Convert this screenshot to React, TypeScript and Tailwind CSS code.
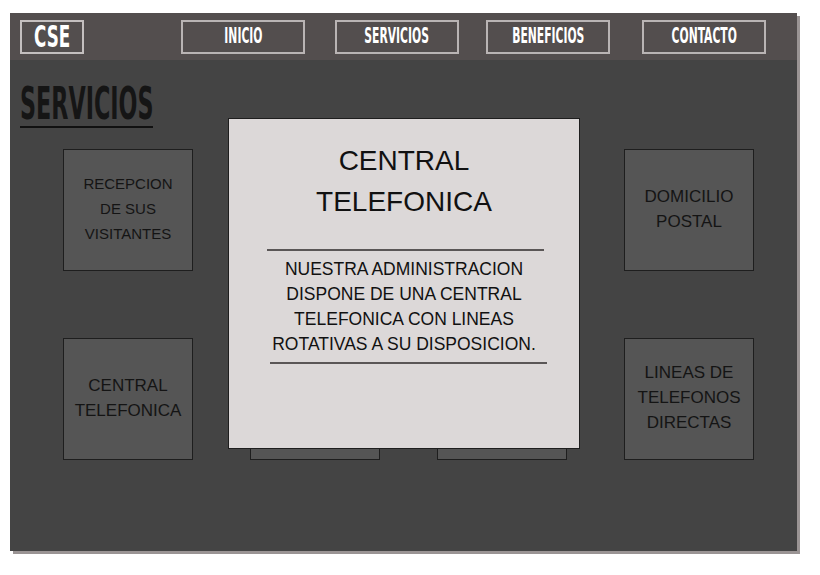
import React from 'react';

const navItems = [
  { label: 'INICIO', ml: 'ml-[97px]' },
  { label: 'SERVICIOS', ml: 'ml-[30px]' },
  { label: 'BENEFICIOS', ml: 'ml-[27px]' },
  { label: 'CONTACTO', ml: 'ml-[32px]' },
];

const services = [
  { lines: ['RECEPCION', 'DE SUS', 'VISITANTES'], size: 'text-[15px]' },
  { lines: [''], size: 'text-[17px]' },
  { lines: [''], size: 'text-[17px]' },
  { lines: ['DOMICILIO', 'POSTAL'], size: 'text-[17px]' },
  { lines: ['CENTRAL', 'TELEFONICA'], size: 'text-[17px]' },
  { lines: [''], size: 'text-[17px]' },
  { lines: [''], size: 'text-[17px]' },
  { lines: ['LINEAS DE', 'TELEFONOS', 'DIRECTAS'], size: 'text-[17px]' },
];

const narrow = "font-['DejaVu_Sans_Condensed','Liberation_Sans',sans-serif] font-bold";

export default function App() {
  return (
    <div className="w-full h-[575px] bg-white pt-[13px] pl-[10px] font-['Liberation_Sans',Arial,sans-serif]">
      <div className="w-[787px] h-[538px] flex flex-col shadow-[3px_3px_0_#9a9494]">
        {/* header */}
        <div className="h-[47px] bg-[#534e4e] flex items-center pl-[10px]">
          <div className="w-[64px] h-[34px] border-2 border-[#c4bfbf] flex items-center justify-center overflow-hidden">
            <span className={`${narrow} inline-block text-[30px] leading-none text-white scale-x-[0.62]`}>CSE</span>
          </div>
          {navItems.map((n) => (
            <div
              key={n.label}
              className={`${n.ml} w-[124px] h-[34px] border-2 border-[#b9b4b4] flex items-center justify-center overflow-hidden`}
            >
              <span className={`${narrow} inline-block text-[21px] leading-none text-white scale-x-[0.57] whitespace-nowrap`}>
                {n.label}
              </span>
            </div>
          ))}
        </div>

        {/* content */}
        <div className="relative flex-1 bg-[#444444]">
          <div className="pl-[10px] pt-[21px] h-[89px]">
            <h1 className="inline-block border-b-2 border-[#111] w-[133px] overflow-visible">
              <span className={`${narrow} inline-block origin-left scale-x-[0.55] text-[45px] leading-[45px] text-[#151515] whitespace-nowrap`}>
                SERVICIOS
              </span>
            </h1>
          </div>

          <div className="ml-[53px] grid grid-cols-[130px_130px_130px_130px] gap-x-[57px] gap-y-[67px]">
            {services.map((s, i) => (
              <div
                key={i}
                className="h-[122px] bg-[#555555] border border-[#1e1e1e] flex items-center justify-center text-center"
              >
                <div className={`${s.size} leading-[25px] text-[#141414] -mt-[3px]`}>
                  {s.lines.map((l, j) => (
                    <div key={j}>{l}</div>
                  ))}
                </div>
              </div>
            ))}
          </div>

          {/* detail card over the grid */}
          <div className="absolute left-[218px] top-[58px] w-[352px] h-[331px] bg-[#dcd8d8] border border-[#1e1e1e] pt-[21px]">
            <div className="text-center text-[28px] leading-[41px] text-[#111]">
              <div>CENTRAL</div>
              <div>TELEFONICA</div>
            </div>
            <div className="ml-[38px] mt-[27px] w-[277px] h-[2px] bg-[#5a5656]" />
            <div className="mt-[6px] text-center text-[17.5px] leading-[25px] text-[#111]">
              <div>NUESTRA ADMINISTRACION</div>
              <div>DISPONE DE UNA CENTRAL</div>
              <div>TELEFONICA CON LINEAS</div>
              <div>ROTATIVAS A SU DISPOSICION.</div>
            </div>
            <div className="ml-[41px] mt-[5px] w-[277px] h-[2px] bg-[#5a5656]" />
          </div>
        </div>
      </div>
    </div>
  );
}
